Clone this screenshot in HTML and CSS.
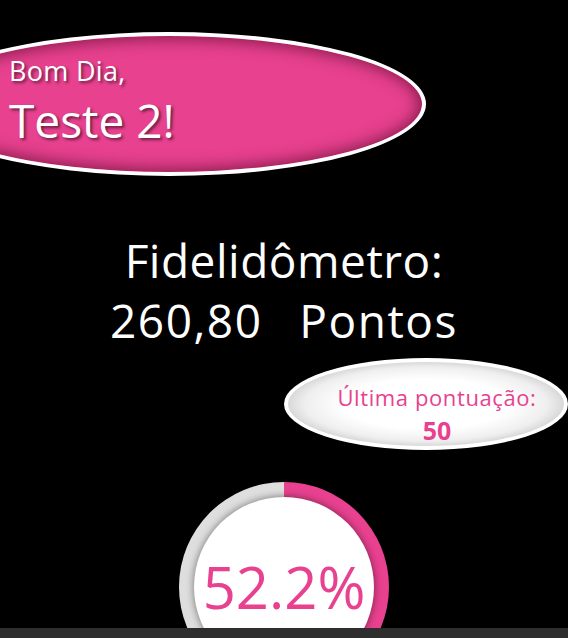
FILE: index.html
```html
<!DOCTYPE html>
<html lang="pt-BR">
<head>
<meta charset="utf-8">
<title>Fidelidômetro</title>
<link rel="stylesheet" href="styles.css">
</head>
<body>
<main class="screen">
  <div class="content">
    <header class="greeting">
      <p class="hello">Bom Dia,</p>
      <p class="name">Teste 2!</p>
    </header>
    <section class="score">
      <h1 class="score-title">Fidelidômetro:</h1>
      <p class="score-value">260,80&nbsp; Pontos</p>
    </section>
    <div class="last">
      <span class="last-label">Última pontuação:</span>
      <strong class="last-value">50</strong>
    </div>
    <div class="gauge" style="--p: 52.2%">
      <div class="gauge-inner">52.2%</div>
    </div>
  </div>
  <div class="scrollbar"></div>
</main>
</body>
</html>
```

FILE: styles.css
```css
* { box-sizing: border-box; }

html, body {
  margin: 0;
  padding: 0;
  background: #000;
}

body {
  font-family: "Open Sans", Lato, "Noto Sans", sans-serif;
  color: #fff;
}

.screen {
  width: 568px;
  height: 638px;
  display: flex;
  flex-direction: column;
  overflow: hidden;
}

.content {
  flex: 1;
  overflow: hidden;
  display: flex;
  flex-direction: column;
}

.greeting {
  margin: 32px 0 0 -88px;
  width: 514px;
  height: 144px;
  flex-shrink: 0;
  border: 4px solid #fff;
  border-radius: 50%;
  background: #e8418f;
  box-shadow: inset 0 0 16px 3px rgba(70, 0, 30, 0.6);
  padding: 20px 0 0 93px;
  text-shadow: 2px 2px 3px rgba(0, 0, 0, 0.55);
}

.hello {
  margin: 0;
  font-size: 27px;
  line-height: 30px;
  letter-spacing: 0.3px;
}

.name {
  margin: 8px 0 0;
  font-size: 46px;
  line-height: 52px;
}

.score {
  margin-top: 54px;
  text-align: center;
}

.score-title,
.score-value {
  margin: 0;
  font-size: 46px;
  line-height: 60px;
  font-weight: 400;
}

.score-title {
  letter-spacing: 0.5px;
}

.score-value {
  letter-spacing: 1.5px;
  word-spacing: 5px;
}

.last {
  margin: 8px 0 0 auto;
  width: 284px;
  height: 92px;
  flex-shrink: 0;
  border: 4px solid #fff;
  border-radius: 50%;
  background: radial-gradient(ellipse at center, #fff 42%, #efefef 62%, #8e8e8e 100%);
  display: flex;
  flex-direction: column;
  align-items: center;
  padding: 22px 0 0 22px;
  color: #e8418f;
}

.last-label {
  font-size: 22px;
  line-height: 26px;
  letter-spacing: 0.6px;
}

.last-value {
  margin-top: 6px;
  font-size: 25px;
  line-height: 28px;
  font-weight: 700;
}

.gauge {
  margin: 32px auto 0;
  width: 210px;
  height: 210px;
  flex-shrink: 0;
  border-radius: 50%;
  background: conic-gradient(#e8418f 0 var(--p), #dedede var(--p) 100%);
  display: flex;
  align-items: center;
  justify-content: center;
}

.gauge-inner {
  width: 180px;
  height: 180px;
  border-radius: 50%;
  background: #fff;
  box-shadow: 0 0 7px 1px rgba(0, 0, 0, 0.4);
  display: flex;
  align-items: center;
  justify-content: center;
  color: #e8418f;
  font-size: 58px;
  line-height: 1;
}

.scrollbar {
  height: 10px;
  flex-shrink: 0;
  background: #2e2e2e;
}
```
